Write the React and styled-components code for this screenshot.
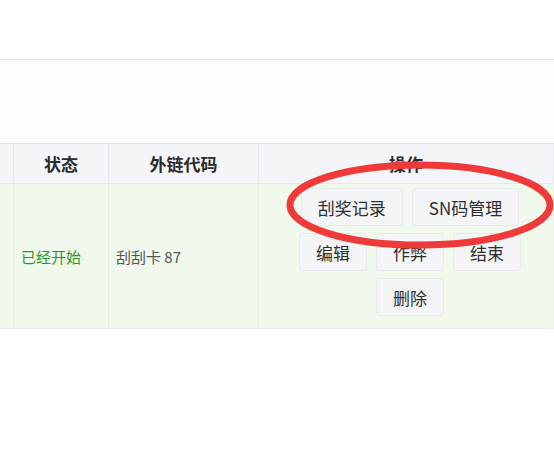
import styled, { createGlobalStyle } from "styled-components";

const GlobalStyle = createGlobalStyle`
  html, body {
    margin: 0;
    padding: 0;
    background: #ffffff;
  }
  body {
    font-family: "Noto Sans CJK SC", "Noto Sans", "Liberation Sans", sans-serif;
    color: #303133;
  }
`;

const Page = styled.div`
  width: 554px;
  height: 464px;
  overflow: hidden;
  background: #ffffff;
`;

const TopBar = styled.div`
  height: 59px;
  background: #ffffff;
  border-bottom: 1px solid #e6e6e6;
`;

const FilterArea = styled.div`
  height: 78px;
  background: #fdfdfd;
  border-bottom: 1px solid #f4f4f4;
  margin-bottom: 4px;
`;

const TableWrap = styled.div`
  position: relative;
`;

const Table = styled.table`
  width: 554px;
  border-collapse: collapse;
  table-layout: fixed;
  border-top: 1px solid #e4e7ed;
  border-bottom: 1px solid #e4e7ed;
`;

const HeadCell = styled.th`
  height: 39px;
  padding: 0;
  background: #f4f5f9;
  border-right: 1px solid #e4e7ed;
  border-bottom: 1px solid #e4e7ed;
  font-size: 17px;
  font-weight: 700;
  color: #2b2b2b;
  text-align: center;
  width: ${p => p.$w ? p.$w + "px" : "auto"};
`;

const Cell = styled.td`
  height: 144px;
  padding: 0 7px;
  background: #f0f9eb;
  border-right: 1px solid #e8ede4;
  font-size: 15px;
  color: ${p => p.$green ? "#1f9a1f" : "#555555"};
  vertical-align: middle;
`;

const OpsCell = styled(Cell)`
  height: 136px;
  padding: 0 0 8px 8px;
`;

const ButtonWrap = styled.div`
  width: 240px;
  margin: 0 auto;
  display: flex;
  flex-wrap: wrap;
  justify-content: center;
  column-gap: 9px;
  row-gap: 7px;
`;

const Button = styled.button`
  height: 38px;
  padding: 0 16px;
  border: 1px solid #e6e8ec;
  border-radius: 4px;
  background: #f4f5f7;
  color: #2f2f2f;
  font-family: inherit;
  font-size: 17px;
  line-height: 1;
  cursor: pointer;
`;

const Circle = styled.svg`
  position: absolute;
  left: 280px;
  top: 12px;
  pointer-events: none;
`;

const actions = ["刮奖记录", "SN码管理", "编辑", "作弊", "结束", "删除"];

export default function App() {
  return (
    <Page>
      <GlobalStyle />
      <TopBar />
      <FilterArea />
      <TableWrap>
        <Table>
          <thead>
            <tr>
              <HeadCell $w={13} />
              <HeadCell $w={94}>状态</HeadCell>
              <HeadCell $w={149}>外链代码</HeadCell>
              <HeadCell>操作</HeadCell>
            </tr>
          </thead>
          <tbody>
            <tr>
              <Cell />
              <Cell $green>已经开始</Cell>
              <Cell>刮刮卡 87</Cell>
              <OpsCell>
                <ButtonWrap>
                  {actions.map(a => <Button key={a}>{a}</Button>)}
                </ButtonWrap>
              </OpsCell>
            </tr>
          </tbody>
        </Table>
        <Circle width="280" height="100" viewBox="0 0 280 100">
          <ellipse cx="140" cy="50" rx="130" ry="40" fill="none" stroke="#f03a3a" strokeWidth="7" />
        </Circle>
      </TableWrap>
    </Page>
  );
}
